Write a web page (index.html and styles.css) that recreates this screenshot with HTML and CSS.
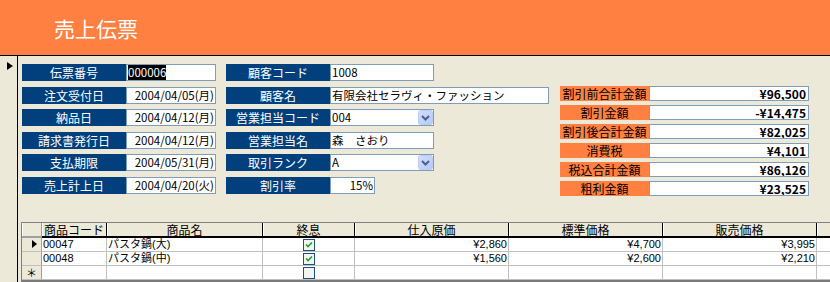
FILE: index.html
```html
<!DOCTYPE html>
<html lang="ja">
<head>
<meta charset="utf-8">
<title>売上伝票</title>
<link rel="stylesheet" href="styles.css">
</head>
<body>
<div class="header"><h1 class="title">売上伝票</h1></div>
<div class="main">
  <div class="selector"><span class="tri"></span></div>
  <div class="content">
    <div class="form">
      <div class="col col-left">
        <div class="row"><span class="lbl">伝票番号</span><span class="box"><span class="hl">000006</span></span></div>
        <div class="row"><span class="lbl">注文受付日</span><span class="box r">2004/04/05(月)</span></div>
        <div class="row"><span class="lbl">納品日</span><span class="box r">2004/04/12(月)</span></div>
        <div class="row"><span class="lbl">請求書発行日</span><span class="box r">2004/04/12(月)</span></div>
        <div class="row"><span class="lbl">支払期限</span><span class="box r">2004/05/31(月)</span></div>
        <div class="row"><span class="lbl">売上計上日</span><span class="box r">2004/04/20(火)</span></div>
      </div>
      <div class="col col-mid">
        <div class="row"><span class="lbl">顧客コード</span><span class="box">1008</span></div>
        <div class="row"><span class="lbl">顧客名</span><span class="box wide">有限会社セラヴィ・ファッション</span></div>
        <div class="row"><span class="lbl">営業担当コード</span><span class="box combo"><span class="ctext">004</span><svg class="cbtn" width="15" height="15" viewBox="0 0 15 15"><defs><linearGradient id="g1" x1="0" y1="0" x2="1" y2="1"><stop offset="0" stop-color="#D3DEFD"/><stop offset="1" stop-color="#B4C8F7"/></linearGradient></defs><rect x="0.5" y="0.5" width="14" height="14" rx="2" fill="url(#g1)" stroke="#B9CCF5"/><path d="M4 6 L7.5 9.5 L11 6" fill="none" stroke="#4D6185" stroke-width="2"/></svg></span></div>
        <div class="row"><span class="lbl">営業担当名</span><span class="box">森　さおり</span></div>
        <div class="row"><span class="lbl">取引ランク</span><span class="box combo"><span class="ctext">A</span><svg class="cbtn" width="15" height="15" viewBox="0 0 15 15"><defs><linearGradient id="g2" x1="0" y1="0" x2="1" y2="1"><stop offset="0" stop-color="#D3DEFD"/><stop offset="1" stop-color="#B4C8F7"/></linearGradient></defs><rect x="0.5" y="0.5" width="14" height="14" rx="2" fill="url(#g2)" stroke="#B9CCF5"/><path d="M4 6 L7.5 9.5 L11 6" fill="none" stroke="#4D6185" stroke-width="2"/></svg></span></div>
        <div class="row"><span class="lbl">割引率</span><span class="box r short">15%</span></div>
      </div>
      <div class="col col-right">
        <div class="row rrow"><span class="lbl olbl">割引前合計金額</span><span class="box sum">¥96,500</span></div>
        <div class="row rrow"><span class="lbl olbl">割引金額</span><span class="box sum">-¥14,475</span></div>
        <div class="row rrow"><span class="lbl olbl">割引後合計金額</span><span class="box sum">¥82,025</span></div>
        <div class="row rrow"><span class="lbl olbl">消費税</span><span class="box sum">¥4,101</span></div>
        <div class="row rrow"><span class="lbl olbl">税込合計金額</span><span class="box sum">¥86,126</span></div>
        <div class="row rrow"><span class="lbl olbl">粗利金額</span><span class="box sum">¥23,525</span></div>
      </div>
    </div>
    <div class="grid">
      <div class="grow ghead">
        <span class="gc gsel"></span>
        <span class="gc">商品コード</span>
        <span class="gc">商品名</span>
        <span class="gc">終息</span>
        <span class="gc">仕入原価</span>
        <span class="gc">標準価格</span>
        <span class="gc">販売価格</span>
        <span class="gc"></span>
      </div>
      <div class="grow gbody">
        <span class="gc gsel"><span class="gtri"></span></span>
        <span class="gc">00047</span>
        <span class="gc">パスタ鍋(大)</span>
        <span class="gc gchk"><svg width="12" height="12" viewBox="0 0 12 12"><rect x="0.5" y="0.5" width="11" height="11" fill="#F4F4F0" stroke="#1C5180"/><path d="M3 5.5 L5 7.5 L9 3.5" fill="none" stroke="#21A121" stroke-width="1.6"/></svg></span>
        <span class="gc num">¥2,860</span>
        <span class="gc num">¥4,700</span>
        <span class="gc num">¥3,995</span>
        <span class="gc"></span>
      </div>
      <div class="grow gbody">
        <span class="gc gsel"></span>
        <span class="gc">00048</span>
        <span class="gc">パスタ鍋(中)</span>
        <span class="gc gchk"><svg width="12" height="12" viewBox="0 0 12 12"><rect x="0.5" y="0.5" width="11" height="11" fill="#F4F4F0" stroke="#1C5180"/><path d="M3 5.5 L5 7.5 L9 3.5" fill="none" stroke="#21A121" stroke-width="1.6"/></svg></span>
        <span class="gc num">¥1,560</span>
        <span class="gc num">¥2,600</span>
        <span class="gc num">¥2,210</span>
        <span class="gc"></span>
      </div>
      <div class="grow gbody">
        <span class="gc gsel gstar">＊</span>
        <span class="gc"></span>
        <span class="gc"></span>
        <span class="gc gchk"><svg width="12" height="12" viewBox="0 0 12 12"><rect x="0.5" y="0.5" width="11" height="11" fill="#F4F4F0" stroke="#1C5180"/></svg></span>
        <span class="gc"></span>
        <span class="gc"></span>
        <span class="gc"></span>
        <span class="gc"></span>
      </div>
      <div class="gbar"></div>
    </div>
  </div>
</div>
</body>
</html>
```

FILE: styles.css
```css
html, body {
  margin: 0;
  padding: 0;
}
body {
  width: 830px;
  height: 282px;
  overflow: hidden;
  background: #ECE9D8;
  font-family: "Noto Sans CJK JP", "Noto Sans", sans-serif;
  color: #000;
}
.header {
  height: 55px;
  background: #FF8040;
  border-bottom: 1px solid #000;
}
.title {
  margin: 0;
  padding: 18px 0 0 54px;
  font-size: 21px;
  line-height: 21px;
  font-weight: normal;
  color: #fff;
}
.main {
  display: flex;
  height: 226px;
}
.selector {
  width: 17px;
  flex: none;
  border-right: 1px solid #000;
}
.tri {
  display: block;
  width: 0;
  height: 0;
  margin: 6px 0 0 7px;
  border-left: 6px solid #000;
  border-top: 4.5px solid transparent;
  border-bottom: 4.5px solid transparent;
}
.content {
  flex: 1;
  min-width: 0;
}
.form {
  display: flex;
  padding: 8px 0 0 4px;
  height: 130px;
}
.col {
  display: flex;
  flex-direction: column;
  gap: 5.6px;
  flex: none;
}
.col-left {
  width: 194px;
  margin-right: 10px;
}
.col-mid {
  width: 334px;
}
.col-right {
  gap: 4px;
  margin-top: 22px;
}
.row {
  display: flex;
  height: 17px;
}
.lbl {
  width: 104px;
  flex: none;
  background: #013F7D;
  color: #fff;
  font-size: 12px;
  line-height: 17px;
  text-align: center;
  white-space: nowrap;
}
.box {
  box-sizing: border-box;
  width: 90px;
  height: 17px;
  background: #fff;
  border: 1px solid #7F9DB9;
  font-size: 11.5px;
  line-height: 15px;
  padding: 0 1px;
  white-space: nowrap;
  overflow: hidden;
}
.col-mid .box {
  width: 104px;
}
.col-mid .box.wide {
  width: 219px;
}
.col-mid .box.short {
  width: 45px;
}
.r {
  text-align: right;
}
.hl {
  background: #000;
  color: #fff;
}
.combo {
  display: flex;
  align-items: center;
  padding-right: 0;
}
.ctext {
  flex: 1;
}
.cbtn {
  flex: none;
  display: block;
}
.rrow {
  height: 15px;
}
.olbl {
  width: 89px;
  background: #FF8040;
  color: #000;
  line-height: 15px;
}
.box.sum {
  width: 160px;
  height: 15px;
  line-height: 13px;
  font-size: 12px;
  font-weight: bold;
  text-align: right;
  padding-right: 2px;
}
.grid {
  margin: 28px 0 0 3px;
  border-top: 1px solid #808080;
  border-left: 1px solid #808080;
}
.grow {
  display: grid;
  grid-template-columns: 20px 65px 156px 92px 154px 154px 154px 40px;
}
.gc {
  box-sizing: border-box;
  border-right: 1px solid #C0C0C0;
  border-bottom: 1px solid #C0C0C0;
  background: #fff;
  font-family: "Liberation Sans", "Noto Sans CJK JP", sans-serif;
  font-size: 11px;
  line-height: 13px;
  height: 14px;
  padding: 0 1px;
  white-space: nowrap;
}
.ghead .gc {
  height: 15px;
  background: #ECE9D8;
  border-right: 1px solid #000;
  border-bottom: 2px solid #000;
  box-shadow: inset 1px 0 #fff;
  font-family: "Noto Sans CJK JP", sans-serif;
  font-size: 12px;
  text-align: center;
}
.ghead .gsel {
  border-right-color: #A0A0A0;
  border-bottom: 2px solid #A0A0A0;
}
.gbody .gsel {
  background: #ECE9D8;
  border-right-color: #A0A0A0;
}
.gtri {
  display: block;
  width: 0;
  height: 0;
  margin: 2px 0 0 9px;
  border-left: 5px solid #000;
  border-top: 4px solid transparent;
  border-bottom: 4px solid transparent;
}
.gstar {
  text-align: center;
  font-family: "Noto Sans CJK JP", sans-serif;
  font-size: 11px;
  line-height: 13px;
}
.num {
  text-align: right;
}
.gchk {
  display: flex;
  justify-content: center;
  align-items: center;
  padding: 0;
}
.gchk svg {
  display: block;
}
.gbar {
  height: 3px;
  background: #7A7A7A;
}
```
